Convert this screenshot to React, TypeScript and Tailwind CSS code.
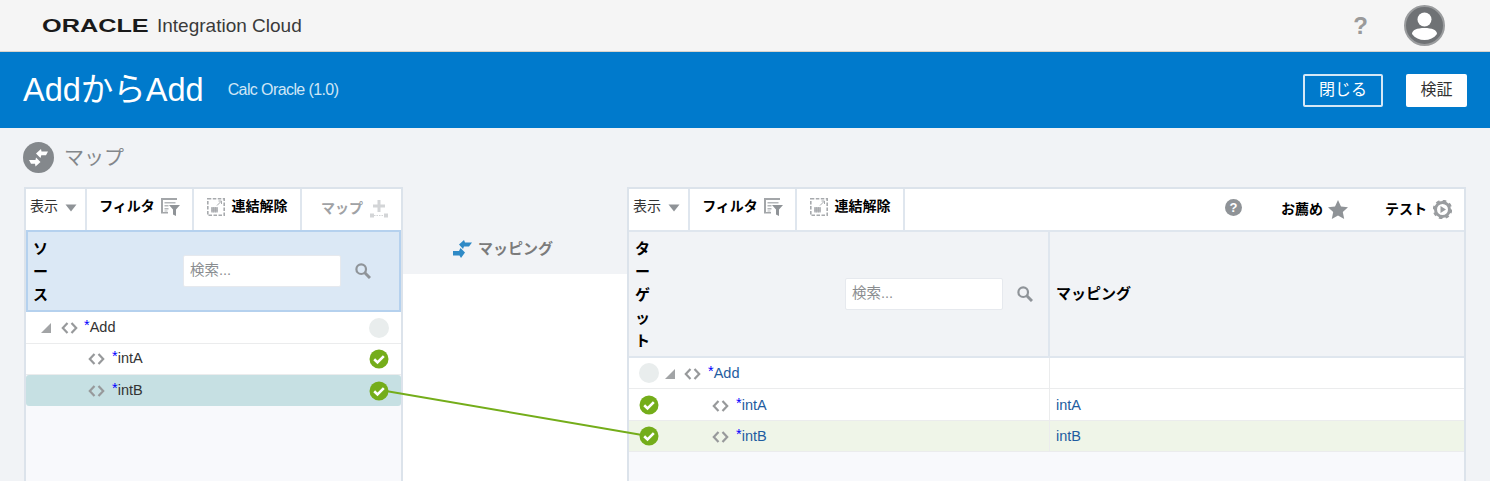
import type { ReactNode } from 'react'

const fontStack = { fontFamily: '"Liberation Sans", "Noto Sans CJK JP", sans-serif' }

function Caret() {
  return (
    <svg width="12" height="8" viewBox="0 0 12 8" className="mt-0.5 ml-[7px]">
      <path d="M0.5 0.5h11L6 7.5z" fill="#8f9397" />
    </svg>
  )
}

function FilterIcon() {
  return (
    <svg width="19" height="18" viewBox="0 0 19 18">
      <path d="M0 0h16v2H2v12h5v1.500H0z" fill="#a3a6a9" />
      <path d="M3.500 4h11v1.500h-11zM3.500 7h4v1.500h-4zM3.500 10h4v1.500h-4zM3.500 12.500h3v1h-3z" fill="#b4b7ba" />
      <path d="M8 7h11l-4 4.500V18l-3-1.500v-5z" fill="#8f9397" />
    </svg>
  )
}

function UnlinkIcon() {
  return (
    <svg width="18" height="18" viewBox="0 0 18 18">
      <rect x="0.800" y="0.800" width="16.400" height="16.400" fill="none" stroke="#a7aaad" strokeWidth="1.600" strokeDasharray="3.500 1.500" />
      <path d="M4 9h7v5.500H4z" fill="#c0c3c6" />
      <path d="M4 11h7M4 12.800h7M6.300 9v5.500M8.600 9v5.500" stroke="#9da0a3" strokeWidth="0.600" />
      <path d="M10 7.500 14 3.500M11.500 3h3v3" fill="none" stroke="#a7aaad" strokeWidth="1" />
    </svg>
  )
}

function MapAddIcon() {
  return (
    <svg width="18" height="18" viewBox="0 0 18 18">
      <path d="M7.500 0h3v4.500H15v3h-4.500V12h-3V7.500H3v-3h4.500z" fill="#d3d5d7" />
      <rect x="0" y="13.500" width="4" height="4" fill="#d3d5d7" />
      <rect x="14" y="13.500" width="4" height="4" fill="#d3d5d7" />
      <path d="M4 15.500h10" stroke="#d3d5d7" strokeDasharray="1.500 1" />
    </svg>
  )
}

function SearchIcon() {
  return (
    <svg width="16" height="16" viewBox="0 0 16 16">
      <circle cx="6.200" cy="6.200" r="4.800" fill="none" stroke="#8f9499" strokeWidth="2.200" />
      <path d="M9.800 9.800 15 15" stroke="#8f9499" strokeWidth="3" />
    </svg>
  )
}

function TagIcon() {
  return (
    <svg width="17" height="12" viewBox="0 0 17 12">
      <path d="M6.500 1 1.800 6l4.700 5M10.500 1l4.700 5-4.700 5" fill="none" stroke="#97999b" strokeWidth="2.200" />
    </svg>
  )
}

function Expander() {
  return (
    <svg width="10" height="10" viewBox="0 0 10 10">
      <path d="M10 0v10H0z" fill="#a2a4a6" />
    </svg>
  )
}

function Check() {
  return (
    <svg width="20" height="20" viewBox="0 0 20 20" className="relative z-20">
      <circle cx="10" cy="10" r="9.500" fill="#74ad1a" />
      <path d="m5.200 10.300 3.300 3.200 6.300-6.300" fill="none" stroke="#fff" strokeWidth="2.600" />
    </svg>
  )
}

function Empty() {
  return <div className="h-5 w-5 rounded-full bg-[#e9eded]" />
}

function Tool({ width, gap, children }: { width: string; gap: string; children: ReactNode }) {
  return (
    <div className={`flex h-full items-center justify-center border-r-2 border-[#dfe6ee] pb-[6px] ${gap} ${width}`}>
      {children}
    </div>
  )
}

function Toolbar() {
  return (
    <>
      <div className="flex h-full w-[61px] items-center border-r-2 border-[#dfe6ee] pb-[6px] pl-[4px]">
        <span className="text-[14px] text-[#333]">表示</span>
        <Caret />
      </div>
      <Tool width="w-[107px]" gap="gap-[6px]">
        <span className="text-[14px] font-bold text-black">フィルタ</span>
        <FilterIcon />
      </Tool>
      <Tool width="w-[108px]" gap="gap-[7px]">
        <UnlinkIcon />
        <span className="text-[14px] font-bold text-black">連結解除</span>
      </Tool>
    </>
  )
}

function NodeName({ name, color }: { name: string; color: string }) {
  return (
    <span className={`text-[14.500px] ${color}`}>
      <span className="relative -top-0.5 text-[#0000ff]">*</span>
      {name}
    </span>
  )
}

function SearchBox({ width }: { width: string }) {
  return (
    <div className="flex items-center gap-[14px]">
      <div className={`flex h-[32px] ${width} items-center rounded-[2px] border border-[#e6e9ee] bg-white px-1.5 text-[14.500px] text-[#8a8d90]`}>
        検索...
      </div>
      <SearchIcon />
    </div>
  )
}

function SourcePanel() {
  return (
    <section className="flex w-[379px] flex-col border-x-2 border-t-2 border-[#dce3eb] bg-[#f8f9fc]">
      <div className="flex h-[41px] bg-white">
        <Toolbar />
        <div className="flex flex-1 items-center justify-center gap-[7px] pb-[2px] pl-[6px]">
          <span className="text-[14px] font-bold text-[#a0a2a5]">マップ</span>
          <MapAddIcon />
        </div>
      </div>
      <div className="flex h-[82px] items-center border-2 border-[#b5d1ee] bg-[#dbe8f5] pr-[28px]">
        <div className="ml-[5px] w-[15px] text-[15px] leading-[23px] font-bold text-black">ソ ー ス</div>
        <div className="ml-auto">
          <SearchBox width="w-[158px]" />
        </div>
      </div>
      <div className="flex h-[32px] items-center border-b border-[#ebeced] bg-white pr-[12px] pl-[15px]">
        <Expander />
        <span className="mr-[6px] ml-[10px]"><TagIcon /></span>
        <NodeName name="Add" color="text-[#333]" />
        <div className="ml-auto"><Empty /></div>
      </div>
      <div className="flex h-[31px] items-center border-b border-[#ebeced] bg-white pr-[12px] pl-[62px]">
        <span className="mr-[7px]"><TagIcon /></span>
        <NodeName name="intA" color="text-[#333]" />
        <div className="ml-auto"><Check /></div>
      </div>
      <div className="flex h-[31px] items-center rounded-[3px] bg-[#c6e0e3] pr-[12px] pl-[62px]">
        <span className="mr-[7px]"><TagIcon /></span>
        <NodeName name="intB" color="text-[#333]" />
        <div className="ml-auto"><Check /></div>
      </div>
    </section>
  )
}

function MappingColumn() {
  return (
    <div className="flex w-[224px] flex-col bg-white">
      <div className="flex h-[87px] items-center justify-center gap-[6px] bg-[#f1f3f6] pt-[38px] pr-[24px]">
        <svg width="19" height="19" viewBox="0 0 19 19">
          <path d="M19 2.500h-7L11 0 6 4.500 10 9l1-2.500h5z" fill="#2f8ac6" />
          <path d="M0 11h6L7.500 8l4.500 4.500L8 18l-1.500-2.500H0z" fill="#2f8ac6" />
        </svg>
        <span className="text-[15px] font-bold text-[#7b7b7b]">マッピング</span>
      </div>
    </div>
  )
}

function TargetRow({ name, mapped, indent, height, highlight, status, expand }: {
  name: string
  mapped?: string
  indent: string
  height: string
  highlight?: boolean
  status: ReactNode
  expand?: boolean
}) {
  return (
    <div className={`flex ${height} border-b border-[#ebeced] ${highlight ? 'bg-[#eff5e8]' : 'bg-white'}`}>
      <div className="flex w-[421px] items-center border-r border-[#ebeced] pl-[10px]">
        {status}
        <div className="mt-[2px] flex items-center">
          {expand && <span className="ml-[6px]"><Expander /></span>}
          <span className={`${indent} mr-[7px]`}><TagIcon /></span>
          <NodeName name={name} color="text-[#1f5da0]" />
        </div>
      </div>
      <div className="flex flex-1 items-center pt-[2px] pl-[6px] text-[14.500px] text-[#1f5da0]">{mapped}</div>
    </div>
  )
}

function TargetPanel() {
  return (
    <section className="flex w-[839px] flex-col border-x-2 border-t-2 border-[#dce3eb] bg-[#f8f9fc]">
      <div className="flex h-[41px] bg-white">
        <Toolbar />
        <div className="ml-auto flex items-center pr-[12px]">
          <svg width="17" height="17" viewBox="0 0 17 17" className="mr-[39px] -mt-1">
            <circle cx="8.500" cy="8.500" r="8.500" fill="#8f9397" />
            <text x="8.500" y="13" textAnchor="middle" fontSize="13" fontWeight="700" fill="#fff">?</text>
          </svg>
          <span className="text-[14px] font-bold text-black">お薦め</span>
          <svg width="20" height="19" viewBox="0 0 20 19" className="mr-[37px] ml-[5px] -mt-px">
            <path d="m10 0 3 6.400 7 .8-5.200 4.800L16.200 19 10 15.500 3.800 19l1.400-7L0 7.200l7-.8z" fill="#8f9397" />
          </svg>
          <span className="text-[14px] font-bold text-black">テスト</span>
          <svg width="19" height="19" viewBox="0 0 19 19" className="ml-[6px]">
            <circle cx="9.500" cy="9.500" r="7" fill="none" stroke="#9a9da0" strokeWidth="3" />
            <circle cx="9.500" cy="9.500" r="8.500" fill="none" stroke="#9a9da0" strokeWidth="2.500" strokeDasharray="3.500 3.170" />
            <path d="M7.500 6v7l5.500-3.500z" fill="#9a9da0" />
          </svg>
        </div>
      </div>
      <div className="flex h-[128px] border-y-2 border-[#dfe6ee] bg-[#f1f3f6]">
        <div className="flex w-[421px] items-center border-r-2 border-[#dfe6ee]">
          <div className="ml-[6px] w-[15px] text-[15px] leading-[23px] font-bold text-black">タ ー ゲ ッ ト</div>
          <div className="ml-auto pr-[15px]">
            <SearchBox width="w-[158px]" />
          </div>
        </div>
        <div className="flex flex-1 items-center pl-[6px] text-[15px] font-bold text-black">マッピング</div>
      </div>
      <TargetRow name="Add" indent="ml-[9px]" height="h-[31px]" status={<Empty />} expand />
      <TargetRow name="intA" mapped="intA" indent="ml-[53px]" height="h-[32px]" status={<Check />} />
      <TargetRow name="intB" mapped="intB" indent="ml-[53px]" height="h-[31px]" status={<Check />} highlight />
    </section>
  )
}

export default function App() {
  return (
    <div className="relative flex h-[481px] w-[1490px] flex-col overflow-hidden bg-[#f1f3f6]" style={fontStack}>
      <header className="flex h-[52px] items-center border-b border-[#d8d4cc] bg-[#f5f5f5] pr-[45px] pl-[42px]">
        <span className="w-[106px] origin-left scale-x-[1.33] text-[19px] leading-none font-bold whitespace-nowrap text-[#1a1a1a]">ORACLE</span>
        <span className="mt-[2px] ml-[9px] text-[19px] text-[#3a3a3a]">Integration Cloud</span>
        <span className="ml-auto text-[24px] font-bold text-[#9a9a9a]">?</span>
        <svg width="41" height="41" viewBox="0 0 41 41" className="ml-[36px]">
          <circle cx="20.500" cy="20.500" r="19.500" fill="#6f7275" stroke="#9a9c9e" strokeWidth="2" />
          <circle cx="20.500" cy="14.500" r="7" fill="#fff" />
          <path d="M8 29c0-4 5-6 12.500-6S33 25 33 29c-3 4-7.500 6-12.500 6S11 33 8 29z" fill="#fff" />
        </svg>
      </header>

      <div className="flex h-[76px] items-center bg-[#007acc] pr-[23px] pl-[23px]">
        <h1 className="text-[32.500px] leading-none font-normal text-white">AddからAdd</h1>
        <span className="ml-[24px] text-[16px] tracking-[-0.6px] text-[#cfe6f6]">Calc Oracle (1.0)</span>
        <button className="ml-auto h-[33px] w-[80px] rounded-[2px] border-2 border-[#d5e8f6] text-[16px] text-white">閉じる</button>
        <button className="ml-[23px] h-[33px] w-[61px] rounded-[2px] bg-white text-[16px] text-[#333]">検証</button>
      </div>

      <div className="flex h-[59px] items-center gap-[10px] pl-[23px]">
        <svg width="31" height="31" viewBox="0 0 31 31">
          <circle cx="15.500" cy="15.500" r="15.500" fill="#84888c" />
          <path d="M25 9.500h-6.500L18 7l-5 4.500 4.500 4.500.8-2.700H23z" fill="#fff" />
          <path d="M6 18h6.500l.5-2.500 4.500 4.500-5 4.500-.5-2.700H8z" fill="#fff" />
        </svg>
        <span className="text-[20px] text-[#83878b]">マップ</span>
      </div>

      <div className="flex flex-1 pl-[24px]">
        <SourcePanel />
        <MappingColumn />
        <TargetPanel />
      </div>

      <svg width="1490" height="481" className="pointer-events-none absolute top-0 left-0 z-10">
        <path d="M380 390 648 436" stroke="#74ad1a" strokeWidth="2" />
      </svg>
    </div>
  )
}
